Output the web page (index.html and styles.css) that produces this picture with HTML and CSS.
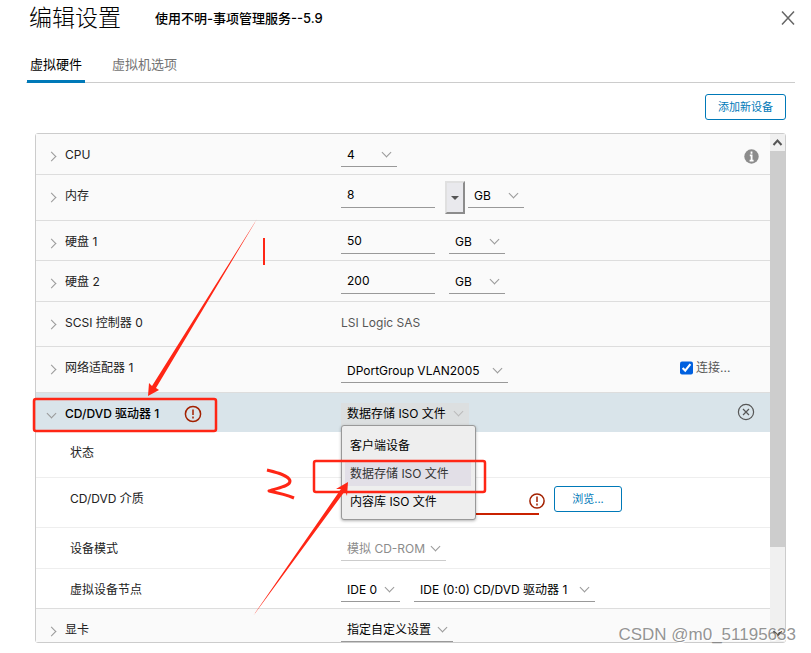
FILE: index.html
```html
<!DOCTYPE html>
<html lang="zh-CN">

<head>
    <meta charset="UTF-8">
    <meta name="viewport" content="width=device-width, initial-scale=1.0">
    <title>编辑设置</title>
    <link rel="stylesheet" href="styles.css">
</head>

<body>
    <main class="dialog">
        <header class="dialog_header">
            <h1>编辑设置</h1>
            <span class="vm_name">使用不明-事项管理服务--5.9</span>
            <button class="close_btn" aria-label="关闭">
                <svg width="14" height="16" viewBox="0 0 14 16">
                    <path d="M1 1.5L13 14.5M13 1.5L1 14.5" />
                </svg>
            </button>
        </header>

        <nav class="tabs">
            <button class="tab active">虚拟硬件</button>
            <button class="tab">虚拟机选项</button>
        </nav>

        <div class="toolbar">
            <button class="btn">添加新设备</button>
        </div>

        <section class="panel">
            <div class="rows">
                <div class="row">
                    <label class="name" for="cpu">CPU</label>
                    <div class="value">
                        <span class="select w_unit"><select id="cpu"><option>4</option></select></span>
                    </div>
                    <div class="action">
                        <svg class="info" width="15" height="15" viewBox="0 0 15 15">
                            <circle cx="7.5" cy="7.5" r="7.2" fill="#8c8c8c" />
                            <path d="M7.5 2.6v2.2M5.8 6.4h1.8v5M5.6 11.6h4" fill="none" stroke="#fff" stroke-width="1.8" />
                        </svg>
                    </div>
                </div>

                <div class="row tall">
                    <label class="name" for="memory">内存</label>
                    <div class="value memory">
                        <input id="memory" type="text" value="8">
                        <button class="combo_btn" aria-label="选择内存大小"></button>
                        <span class="select w_unit"><select aria-label="内存单位"><option>GB</option></select></span>
                    </div>
                </div>

                <div class="row compact">
                    <label class="name" for="disk1">硬盘 1</label>
                    <div class="value">
                        <input id="disk1" type="text" value="50">
                        <span class="select w_unit"><select aria-label="硬盘 1 单位"><option>GB</option></select></span>
                    </div>
                </div>

                <div class="row">
                    <label class="name" for="disk2">硬盘 2</label>
                    <div class="value">
                        <input id="disk2" type="text" value="200">
                        <span class="select w_unit"><select aria-label="硬盘 2 单位"><option>GB</option></select></span>
                    </div>
                </div>

                <div class="row scsi">
                    <span class="name">SCSI 控制器 0</span>
                    <div class="value plain">LSI Logic SAS</div>
                </div>

                <div class="row tall">
                    <label class="name" for="network">网络适配器 1</label>
                    <div class="value network">
                        <span class="select w_network"><select id="network"><option>DPortGroup VLAN2005</option></select></span>
                    </div>
                    <div class="action">
                        <label class="connect"><input type="checkbox" checked>连接...</label>
                    </div>
                </div>

                <div class="row selected">
                    <label class="name open" for="cdrom">CD/DVD 驱动器 1
                        <svg class="error" width="18" height="18" viewBox="0 0 18 18">
                            <circle cx="9" cy="9" r="7.6" />
                            <path d="M9 4.5v5.5M9 11.5v2" />
                        </svg>
                    </label>
                    <div class="value">
                        <span class="select w_iso"><select id="cdrom"><option>数据存储 ISO 文件</option></select></span>
                        <ul class="menu">
                            <li>客户端设备</li>
                            <li class="hover">数据存储 ISO 文件</li>
                            <li>内容库 ISO 文件</li>
                        </ul>
                    </div>
                    <div class="action">
                        <button class="remove_btn" aria-label="移除设备">
                            <svg width="18" height="18" viewBox="0 0 18 18">
                                <circle cx="9" cy="9" r="7.6" />
                                <path d="M6 6l6 6M12 6l-6 6" />
                            </svg>
                        </button>
                    </div>
                </div>

                <div class="row sub tall">
                    <span class="name">状态</span>
                </div>

                <div class="row sub media">
                    <label class="name" for="media">CD/DVD 介质</label>
                    <div class="value">
                        <span class="media_input">
                            <input id="media" type="text">
                            <svg class="error" width="18" height="18" viewBox="0 0 18 18">
                                <circle cx="9" cy="9" r="7.1" />
                                <path d="M9 4.5v5.5M9 11.5v2" />
                            </svg>
                        </span>
                        <button class="btn browse">浏览...</button>
                    </div>
                </div>

                <div class="row sub">
                    <label class="name" for="mode">设备模式</label>
                    <div class="value">
                        <span class="select w_mode"><select id="mode" disabled><option>模拟 CD-ROM</option></select></span>
                    </div>
                </div>

                <div class="row sub compact last">
                    <label class="name" for="node">虚拟设备节点</label>
                    <div class="value">
                        <span class="select w_ide"><select id="node"><option>IDE 0</option></select></span>
                        <span class="select w_node"><select aria-label="节点位置"><option>IDE (0:0) CD/DVD 驱动器 1</option></select></span>
                    </div>
                </div>

                <div class="row cut">
                    <label class="name" for="display">显卡</label>
                    <div class="value">
                        <span class="select w_display"><select id="display"><option>指定自定义设置</option></select></span>
                    </div>
                </div>
            </div>

            <div class="scrollbar">
                <svg width="15" height="17" viewBox="0 0 15 17"><path d="M3.5 11L7.5 6.5L11.5 11" /></svg>
                <div class="thumb"></div>
                <svg width="15" height="17" viewBox="0 0 15 17"><path d="M3.5 6L7.5 10.5L11.5 6" /></svg>
            </div>
        </section>
    </main>

    <!-- red pen marks over the dialog -->
    <svg class="marks" width="500" height="640" viewBox="0 0 500 640">
        <rect x="34" y="399" width="182" height="32" rx="2" />
        <rect x="314" y="461" width="171" height="31" rx="2" />
        <path d="M264 238v27" stroke-width="2" />
        <path d="M267 470C275 472 289 475 290 481C290 487 276 488 269 491C274 492 287 495 294 498" stroke-width="3" stroke-linejoin="round" />
        <path class="arrow" d="M257 219L156 388L159 390L148 396L149 383L152 386Z" />
        <path class="arrow" d="M253 616L345 491L347 496L348 482L336 489L341 489Z" />
    </svg>
    <div class="watermark">CSDN @m0_51195633</div>
</body>

</html>
```
FILE: styles.css
```css
* {
    box-sizing: border-box;
}

body {
    margin: 0;
    background: #fff;
    color: #222;
    font: 12px/20px Inter, "Noto Sans CJK SC", sans-serif;
}

button, input, select {
    margin: 0;
    padding: 0;
    border: 0;
    border-radius: 0;
    background: none;
    color: #000;
    font: inherit;
}

.dialog {
    padding: 0 16px 10px 26px;
}

.dialog_header {
    display: flex;
    align-items: center;
    height: 36px;
}

h1 {
    margin: 0 34px 0 3px;
    color: #000;
    font-size: 23px;
    font-weight: 300;
    line-height: 36px;
}

.vm_name {
    color: #000;
    font-size: 13px;
    font-weight: 500;
}

.close_btn {
    display: flex;
    margin-left: auto;
}

.close_btn svg {
    fill: none;
    stroke: #666;
    stroke-width: 1.5;
}

.tabs {
    display: flex;
    gap: 24px;
    height: 47px;
    padding-left: 1px;
    border-bottom: 1px solid #ccc;
}

.tab {
    height: 47px;
    padding: 11px 3px 0;
    border-bottom: 3px solid transparent;
    color: #737373;
    font-size: 13px;
}

.tab.active {
    border-color: #0079b8;
    color: #000;
}

.toolbar {
    display: flex;
    justify-content: flex-end;
    padding: 11px 9px 13px;
}

.btn {
    height: 26px;
    padding: 0 12px;
    border: 1px solid #0079b8;
    border-radius: 3px;
    background: #fff;
    color: #0079b8;
    font-size: 11px;
}

/* hardware list */
.panel {
    display: flex;
    margin: 0 9px;
    border: 1px solid #ccc;
    border-radius: 3px;
}

.rows {
    flex: 1;
}

.row {
    display: grid;
    grid-template-columns: 305px 1fr 90px;
    min-height: 41px;
    padding-top: 10px;
    border-bottom: 1px solid #ddd;
    background: #fafafa;
}

.row.compact {
    min-height: 40px;
}

.row.scsi {
    min-height: 45px;
}

.row.tall {
    min-height: 46px;
}

.row.media {
    min-height: 50px;
}

.row.cut {
    min-height: 33px;
    border-bottom: 0;
}

.row.selected {
    min-height: 39px;
    border-bottom: 0;
    background: #d9e4ea;
}

.row.sub {
    border-color: #eee;
    background: #fff;
}

.row.sub.last {
    border-color: #ddd;
}

.name {
    display: flex;
    align-items: center;
    height: 22px;
    padding-left: 12px;
}

.name::before {
    content: "";
    width: 6px;
    height: 6px;
    margin: 2px 10px 0 0;
    border: solid #999;
    border-width: 1px 1px 0 0;
    transform: rotate(45deg);
}

.name.open::before {
    margin-top: -2px;
    transform: rotate(135deg);
}

.sub .name {
    padding-left: 34px;
}

.sub .name::before {
    display: none;
}

.selected .name {
    color: #000;
    font-weight: 500;
}

.value {
    display: flex;
    gap: 14px;
    position: relative;
    height: 23px;
}

.value.plain {
    color: #565656;
    line-height: 22px;
}

.value.network {
    padding-top: 3px;
    height: 26px;
}

.value > input {
    width: 94px;
    height: 23px;
    padding: 0 6px 3px;
    border-bottom: 1px solid #999;
}

.select {
    display: grid;
    align-items: center;
    height: 23px;
    border-bottom: 1px solid #999;
}

.select select {
    grid-area: 1 / 1;
    width: 100%;
    height: 22px;
    padding: 0 0 1px 6px;
    appearance: none;
    opacity: 1;
}

/* chevron */
.select::after {
    content: "";
    grid-area: 1 / 1;
    justify-self: end;
    width: 6px;
    height: 6px;
    margin: 0 7px 6px 0;
    border: solid #999;
    border-width: 0 1px 1px 0;
    transform: rotate(45deg);
    pointer-events: none;
}

.select select:disabled {
    color: #8c8c8c;
}

.w_unit { width: 56px; }
.w_network { width: 167px; }
.w_iso { width: 128px; }
.w_mode { width: 105px; border-color: #ccc; }
.w_ide { width: 59px; }
.w_node { width: 181px; }
.w_display { width: 112px; }

.w_iso {
    border: 0;
    background: #dcdfe0;
}

.w_iso::after {
    border-color: #bbb;
}

.memory {
    gap: 3px;
}

.combo_btn {
    display: flex;
    align-items: center;
    justify-content: center;
    width: 20px;
    height: 33px;
    margin: -4px 0 0 7px;
    border: 2px outset #e0e0e0;
    background: #e9e9ed;
}

.combo_btn::after {
    content: "";
    border: 4px solid transparent;
    border-top-color: #555;
    border-bottom: 0;
}

.menu {
    position: absolute;
    z-index: 1;
    top: 22px;
    left: 0;
    width: 135px;
    margin: 0;
    padding: 8px 4px 5px 3px;
    border: 1px solid #999;
    border-radius: 3px;
    background: #eee;
    box-shadow: 0 1px 3px rgba(0, 0, 0, 0.3);
    list-style: none;
    color: #000;
}

.menu li {
    margin-bottom: 4px;
    padding: 2px 5px;
    white-space: nowrap;
}

.menu .hover {
    background: #e2dfe7;
    color: #333;
}

.menu li:last-child {
    margin-bottom: 0;
}

.action {
    display: flex;
    align-items: flex-start;
}

.info {
    margin: 5px 0 0 64px;
}

.remove_btn {
    display: flex;
    margin-left: 57px;
}

.remove_btn svg {
    fill: none;
    stroke: #565656;
    stroke-width: 1.2;
}

.connect {
    display: flex;
    align-items: center;
    gap: 3px;
    color: #565656;
    line-height: 22px;
}

.connect input {
    width: 13px;
    height: 14px;
    accent-color: #0060df;
}

.error {
    flex: none;
    fill: none;
    stroke: #a32100;
    stroke-width: 1.5;
}

.name .error {
    margin-left: 25px;
}

.media_input {
    display: flex;
    align-items: center;
    width: 198px;
    height: 27px;
    border-bottom: 2px solid #c92100;
}

.media_input input {
    flex: 1;
    min-width: 0;
}

.media_input .error {
    margin-right: -7px;
}

.browse {
    width: 68px;
    margin: -2px 0 0 1px;
}

.scrollbar {
    display: flex;
    flex-direction: column;
    justify-content: space-between;
    width: 15px;
    background: #f0f0f0;
}

.scrollbar svg {
    fill: none;
    stroke: #555;
    stroke-width: 2;
}

.thumb {
    flex: 0 0 78%;
    margin-bottom: auto;
    background: #cdcdcd;
}

.marks {
    position: absolute;
    z-index: 2;
    top: 0;
    left: 0;
    fill: none;
    stroke: #ff2615;
    stroke-width: 2.5;
    pointer-events: none;
}

.marks .arrow {
    fill: #ff2615;
    stroke: none;
}

.watermark {
    position: absolute;
    top: 625px;
    right: 15px;
    color: rgba(120, 120, 120, 0.8);
    font: 17px/20px "Liberation Sans", sans-serif;
    text-shadow: 1px 1px 0 #fff;
}
```
